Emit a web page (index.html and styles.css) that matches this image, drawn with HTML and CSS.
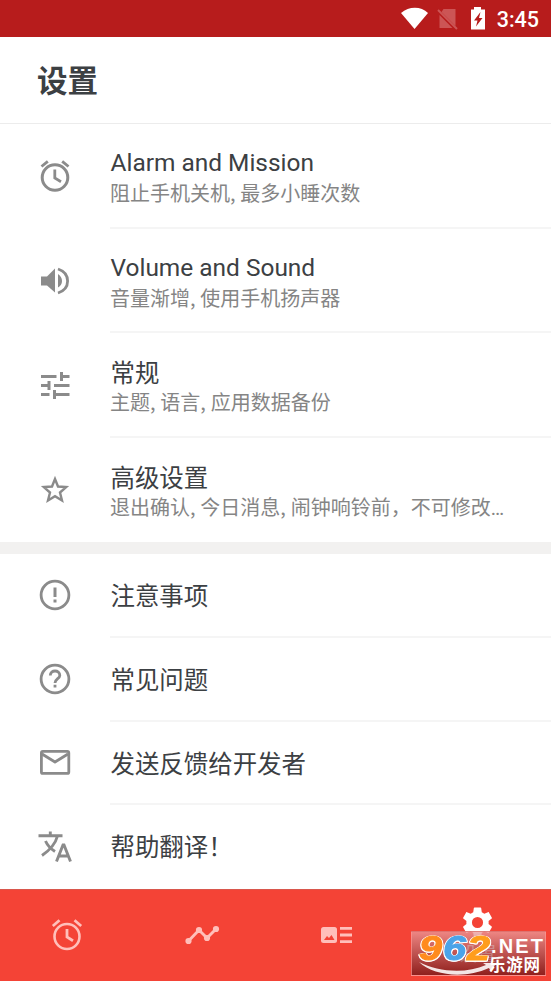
FILE: index.html
```html
<!DOCTYPE html>
<html lang="zh-CN">
<head>
<meta charset="utf-8">
<title>设置</title>
<link rel="stylesheet" href="styles.css">
</head>
<body>
<div class="status">
  <svg class="status-icons" viewBox="0 0 90 37">
    <path fill="#fff" d="M0 13C8 6 20 6 27 13L13.500 29Z"/>
    <path fill="#cc5555" d="M42.500 9H54.500V26L40.500 12ZM38.500 15L51.500 28H38.500Z"/>
    <path stroke="#cc5555" stroke-width="2" d="M37 10L56 29"/>
    <path fill="#fff" d="M73 7H80V9.500H84V29.500H70V9.500H73Z"/>
    <path fill="#b71c1c" d="M79.500 12L73 20.500H76.500L75 26.500L81.500 18H78Z"/>
  </svg>
  <span class="time">3:45</span>
</div>
<header class="header"><h1>设置</h1></header>
<main>
  <section class="group">
    <div class="row">
      <svg class="icon" viewBox="0 0 40 40"><g fill="none" stroke="#8b8b8b"><circle cx="20" cy="21.500" r="12.800" stroke-width="3"/><path stroke-width="2.800" d="M6.500 10.500L12.800 5.300M33.500 10.500L27.200 5.300M19.800 13.500V22L26 25.700"/></g></svg>
      <div class="text"><div class="name">Alarm and Mission</div><div class="desc">阻止手机关机, 最多小睡次数</div></div>
    </div>
    <div class="row">
      <svg class="icon" viewBox="0 0 40 40"><path fill="#8b8b8b" d="M6 15.500H12L20 7.500V31.500L12 24.500H6ZM23 13Q27 16 27 20T23 26.500Z"/><path fill="none" stroke="#8b8b8b" stroke-width="2.800" d="M23 8C29 10 32.600 14.500 32.600 20S29 30 23 32"/></svg>
      <div class="text"><div class="name">Volume and Sound</div><div class="desc">音量渐增, 使用手机扬声器</div></div>
    </div>
    <div class="row">
      <svg class="icon" viewBox="0 0 40 40"><path fill="none" stroke="#8b8b8b" stroke-width="3" d="M6 11.500H21.500M26.500 11.500H34.500M26.500 7V16M6 20.500H14M14 16V25M19 20.500H34.500M6 29.500H14.500M19.500 29.500H34.500M19.500 25V34"/></svg>
      <div class="text"><div class="name cjk">常规</div><div class="desc">主题, 语言, 应用数据备份</div></div>
    </div>
    <div class="row">
      <svg class="icon" viewBox="0 0 40 40"><path fill="none" stroke="#8b8b8b" stroke-width="2.400" d="M20 9L23 16.500L31.200 17.100L25 22.500L27 30.500L20 26.200L13 30.500L15 22.500L8.800 17.100L17 16.500Z"/></svg>
      <div class="text"><div class="name cjk">高级设置</div><div class="desc">退出确认, 今日消息, 闹钟响铃前，不可修改<span class="more">…</span></div></div>
    </div>
  </section>
  <section class="group simple">
    <div class="row">
      <svg class="icon" viewBox="0 0 40 40"><circle cx="20" cy="20" r="13.900" fill="none" stroke="#8b8b8b" stroke-width="2.800"/><path fill="#8b8b8b" d="M18.500 12.500H21.500V22H18.500ZM18.500 24.500H21.500V27.500H18.500Z"/></svg>
      <div class="text"><div class="name">注意事项</div></div>
    </div>
    <div class="row">
      <svg class="icon" viewBox="0 0 40 40"><g fill="none" stroke="#8b8b8b" stroke-width="2.800"><circle cx="20" cy="20" r="13.900"/><path d="M15.300 16.500C15.300 10.500 24.800 10.500 24.800 16.500C24.800 19.500 20 20 20 24M20 25.800V28.600"/></g></svg>
      <div class="text"><div class="name">常见问题</div></div>
    </div>
    <div class="row">
      <svg class="icon" viewBox="0 0 40 40"><g fill="none" stroke="#8b8b8b" stroke-width="2.800" stroke-linejoin="round"><rect x="6.400" y="9.400" width="27.400" height="22" rx="1.500"/><path d="M7 12L20 20L33 12"/></g></svg>
      <div class="text"><div class="name">发送反馈给开发者</div></div>
    </div>
    <div class="row">
      <svg class="icon" viewBox="0 0 40 40"><g fill="none" stroke="#8b8b8b" stroke-width="2.900"><path d="M3.500 9.700H27.500M15.300 5.500V9.500M22.500 10C20.500 17.500 15 24 7 29.500M10.500 15C12.500 19.500 16 23 20 25.500"/><path d="M21.500 35.500L28 19H29L35.500 35.500M24 30H33"/></g></svg>
      <div class="text"><div class="name">帮助翻译！</div></div>
    </div>
  </section>
</main>
<nav class="nav">
  <div class="tab"><svg class="nav-icon" viewBox="0 0 40 40"><g fill="none" stroke="#ffbfba"><circle cx="20" cy="21.500" r="12.500" stroke-width="2.600"/><path stroke-width="2.800" d="M5.800 11L12.500 5.300M34.200 11L27.500 5.300M20 14V22L26 25.700"/></g></svg></div>
  <div class="tab"><svg class="nav-icon" viewBox="0 0 40 40"><path fill="none" stroke="#ffbfba" stroke-width="2.900" d="M6.500 26L17 15L25 23L34 14"/><g fill="#ffbfba"><circle cx="6.500" cy="26" r="3.100"/><circle cx="17" cy="15" r="3.100"/><circle cx="25" cy="23" r="3.100"/><circle cx="34" cy="14" r="3.100"/></g></svg></div>
  <div class="tab"><svg class="nav-icon" viewBox="0 0 40 40"><rect x="5" y="12" width="16" height="16" rx="2.500" fill="#ffbfba"/><path fill="#f44336" d="M8 25L11 21L13 23L15.500 20L18.500 25Z"/><path stroke="#ffbfba" stroke-width="2.900" d="M24 13.400H36M24 20H36M24 26.600H36"/></svg></div>
  <div class="tab active"><svg class="gear" viewBox="2 2 20 20"><path fill="#fff" d="M19.140 12.940c.04-.3.060-.610.060-.940s-.02-.640-.070-.940l2.030-1.580c.18-.14.230-.410.120-.610l-1.920-3.320c-.12-.22-.370-.290-.590-.220l-2.390.960c-.5-.380-1.030-.700-1.620-.940l-.360-2.540c-.04-.240-.240-.410-.480-.410h-3.840c-.24 0-.430.170-.470.410l-.36 2.540c-.59.240-1.130.570-1.620.940l-2.390-.960c-.22-.080-.470 0-.590.220L2.740 8.870c-.12.210-.080.470.120.610l2.030 1.580c-.05.300-.090.630-.090.940s.02.640.070.940l-2.030 1.580c-.18.140-.230.410-.120.610l1.920 3.320c.12.220.370.290.590.220l2.390-.960c.5.380 1.030.700 1.620.940l.36 2.540c.05.240.240.410.480.410h3.840c.24 0 .44-.170.470-.410l.36-2.540c.59-.240 1.130-.560 1.620-.940l2.390.960c.22.080.470 0 .59-.220l1.920-3.320c.12-.220.070-.470-.120-.610zM12 15.600A3.600 3.600 0 1 1 12 8.400A3.600 3.600 0 0 1 12 15.600Z"/></svg><span class="tab-label">设置</span></div>
</nav>
<div class="mark">
  <svg class="mark-art" viewBox="0 0 133 43">
    <g class="digits"><text x="7" y="28" fill="#ff8b1e" stroke="#ff8b1e" textLength="23" lengthAdjust="spacingAndGlyphs">9</text><text x="31" y="28" fill="#4ba3e8" stroke="#4ba3e8" textLength="23" lengthAdjust="spacingAndGlyphs">6</text><text x="55" y="28" fill="#ff9d1c" stroke="#ff9d1c" textLength="23" lengthAdjust="spacingAndGlyphs">2</text></g>
    <path fill="#fff" opacity=".88" d="M7 30C26 40 54 42 74 33L71 31L84 31L79 40L77 36C53 47 22 44 7 30Z"/>
    <g class="site"><text x="79" y="21" font-size="20" textLength="52">.NET</text><text x="77" y="39" font-size="16.500" textLength="51">乐游网</text></g>
  </svg>
</div>
</body>
</html>
```

FILE: styles.css
```css
* { box-sizing: border-box; }
body {
  margin: 0;
  width: 551px;
  height: 981px;
  overflow: hidden;
  position: relative;
  background: #fff;
  color: #3c4043;
  font-family: Roboto, "Noto Sans CJK SC", sans-serif;
}
svg { display: block; flex: none; }
.status {
  height: 37px;
  background: #b71c1c;
  display: flex;
  align-items: center;
  justify-content: flex-end;
  padding-right: 12px;
}
.status-icons { width: 90px; height: 37px; margin-right: 6px; }
.time { color: #fff; font-size: 21.500px; font-weight: 500; line-height: 37px; padding-top: 1px; }
.header {
  height: 87px;
  border-bottom: 1px solid #ececec;
  padding-left: 37px;
}
h1 { margin: 0; font-size: 30.500px; line-height: 90px; font-weight: 700; }
.row {
  height: 104.500px;
  display: flex;
  align-items: center;
  padding-left: 35px;
}
.icon { width: 40px; height: 40px; }
.text {
  flex: 1;
  align-self: stretch;
  margin-left: 35px;
  padding-top: 24px;
  border-bottom: 2px solid #f5f5f5;
  white-space: nowrap;
}
.row:last-child .text { border-bottom: 0; }
.name { font-size: 24.450px; line-height: 30px; padding-left: .5px; }
.cjk { line-height: 34px; margin-bottom: -4px; }
.desc {
  font-size: 20px;
  line-height: 30px;
  color: #858585;
  font-family: "Noto Sans CJK SC", sans-serif;
  word-spacing: .3px;
}
.more { font-family: Roboto, sans-serif; }
.simple { border-top: 12px solid #f2f1f0; }
.simple .row { height: 83.750px; }
.simple .icon { margin-top: -2px; }
.simple .text { padding-top: 28px; }
.nav {
  height: 92px;
  background: #f44336;
  border-top: 1px solid #d9574d;
  display: flex;
}
.tab {
  flex: 0 0 134.500px;
  display: flex;
  flex-direction: column;
  align-items: center;
  padding-top: 25px;
}
.nav-icon { width: 40px; height: 40px; }
.active { flex: 0 0 147.500px; padding-top: 17px; }
.gear { width: 31px; height: 31px; }
.tab-label { color: #fff; font-size: 19px; line-height: 26px; margin-top: 4px; }
.mark {
  position: absolute;
  left: 411px;
  top: 931px;
  width: 135px;
  height: 45px;
  background: linear-gradient(rgba(235, 155, 155, .75), rgba(110, 20, 20, .75));
  border: 1px solid rgba(255, 150, 145, .7);
}
.mark-art { width: 133px; height: 43px; }
.digits {
  font: italic 700 35px "Liberation Sans", sans-serif;
  stroke-width: 1px;
  filter: drop-shadow(1px 0 0 #fff) drop-shadow(-1px 0 0 #fff) drop-shadow(0 1px 0 #fff);
}
.site { font-family: "Liberation Sans", "Noto Sans CJK SC", sans-serif; font-weight: 700; fill: #fff; }
```
